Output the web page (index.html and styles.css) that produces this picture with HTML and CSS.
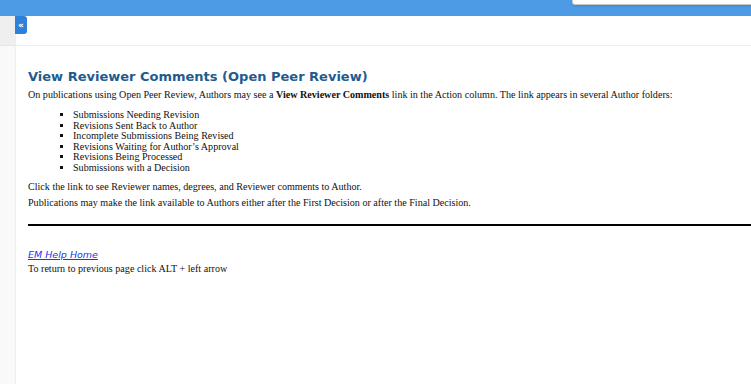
FILE: index.html
```html
<!DOCTYPE html>
<html lang="en">
<head>
    <meta charset="UTF-8">
    <title>View Reviewer Comments (Open Peer Review)</title>
    <link rel="stylesheet" href="styles.css">
</head>
<body>
    <header class="topbar">
        <div class="search-box"></div>
    </header>
    <div class="layout">
        <div class="sidebar">
            <div class="sidebar-top"></div>
        </div>
        <div class="main">
            <div class="toolbar">
                <button class="collapse-btn">&laquo;</button>
            </div>
            <div class="content">
                <h1>View Reviewer Comments (Open Peer Review)</h1>
                <p>On publications using Open Peer Review, Authors may see a <b>View Reviewer Comments</b> link in the Action column. The link appears in several Author folders:</p>
                <ul>
                    <li>Submissions Needing Revision</li>
                    <li>Revisions Sent Back to Author</li>
                    <li>Incomplete Submissions Being Revised</li>
                    <li>Revisions Waiting for Author’s Approval</li>
                    <li>Revisions Being Processed</li>
                    <li>Submissions with a Decision</li>
                </ul>
                <p>Click the link to see Reviewer names, degrees, and Reviewer comments to Author.</p>
                <p>Publications may make the link available to Authors either after the First Decision or after the Final Decision.</p>
                <hr>
                <a class="help-link" href="#">EM Help Home</a>
                <p>To return to previous page click ALT + left arrow</p>
            </div>
        </div>
    </div>
</body>
</html>
```
FILE: styles.css
```css
body {
    margin: 0;
    padding: 0;
    background-color: #fff;
    font-family: "Liberation Serif", serif;
    font-size: 10.1px;
    color: #111;
    overflow: hidden;
}
.topbar {
    height: 16px;
    background-color: #4d9be4;
    display: flex;
    justify-content: flex-end;
}
.search-box {
    width: 178px;
    height: 4px;
    background: #fff;
    border: 1px solid #c8c8c8;
    border-top: none;
    border-right: none;
    border-radius: 0 0 0 3px;
    box-shadow: 0 1px 2px rgba(0, 0, 0, 0.15);
}
.layout {
    display: flex;
    height: 368px;
}
.sidebar {
    width: 15px;
    background-color: #f9f9f9;
    border-right: 1px solid #eeeeee;
}
.sidebar-top {
    height: 29px;
    background-color: #efefef;
    border-bottom: 1px solid #e6e6e6;
}
.main {
    flex: 1;
}
.toolbar {
    height: 29px;
    border-bottom: 1px solid #efefef;
}
.collapse-btn {
    display: block;
    margin-left: -1px;
    width: 12px;
    height: 18px;
    padding: 0;
    border: none;
    border-radius: 0 3px 3px 0;
    background-color: #2f80d8;
    color: #fff;
    font-family: "DejaVu Sans", sans-serif;
    font-size: 9px;
    font-weight: bold;
    line-height: 18px;
}
.content {
    padding: 23px 0 0 12px;
}
.content h1 {
    margin: 0 0 5px;
    font-family: "DejaVu Sans", sans-serif;
    font-size: 13px;
    font-weight: bold;
    color: #1f5b8f;
}
.content p {
    margin: 0 0 4px;
    line-height: 12px;
}
.content ul {
    margin: 9px 0 8px;
    padding-left: 45px;
    list-style: square;
    line-height: 10.5px;
}
.content hr {
    margin: 15px 0 0;
    border: none;
    border-top: 2px solid #000;
}
.help-link {
    display: inline-block;
    margin: 23px 0 3px;
    font-family: "DejaVu Sans", sans-serif;
    font-size: 9.5px;
    font-style: italic;
    color: #2233ee;
}
```
